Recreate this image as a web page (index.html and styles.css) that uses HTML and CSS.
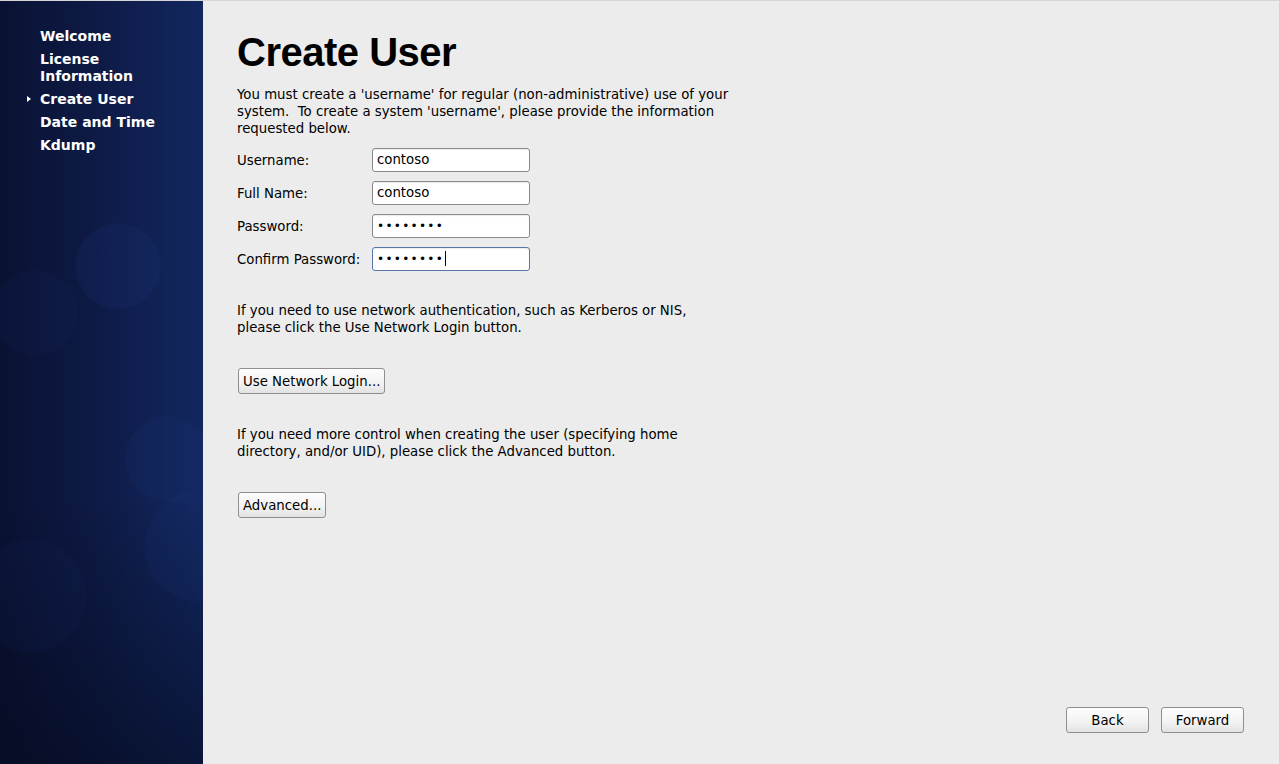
FILE: index.html
```html
<!DOCTYPE html>
<html>
<head>
<meta charset="utf-8">
<link rel="stylesheet" href="styles.css">
</head>
<body>
<div class="app">
  <nav class="sidebar">
    <ul class="steps">
      <li>Welcome</li>
      <li>License<br>Information</li>
      <li class="current">Create User</li>
      <li>Date and Time</li>
      <li>Kdump</li>
    </ul>
  </nav>
  <main class="content">
    <h1 class="title">Create User</h1>
    <p class="text">You must create a 'username' for regular (non-administrative) use of your<br>system.&nbsp; To create a system 'username', please provide the information<br>requested below.</p>
    <div class="form">
      <div class="row"><span class="label">Username:</span><div class="field">contoso</div></div>
      <div class="row"><span class="label">Full Name:</span><div class="field">contoso</div></div>
      <div class="row"><span class="label">Password:</span><div class="field dots">••••••••</div></div>
      <div class="row"><span class="label">Confirm Password:</span><div class="field dots focus">••••••••<span class="caret"></span></div></div>
    </div>
    <p class="text gap1">If you need to use network authentication, such as Kerberos or NIS,<br>please click the Use Network Login button.</p>
    <div class="btnrow gap2"><button class="btn">Use Network Login...</button></div>
    <p class="text gap3">If you need more control when creating the user (specifying home<br>directory, and/or UID), please click the Advanced button.</p>
    <div class="btnrow gap2"><button class="btn">Advanced...</button></div>
    <div class="footer">
      <button class="btn nav">Back</button>
      <button class="btn nav">Forward</button>
    </div>
  </main>
</div>
</body>
</html>
```
FILE: styles.css
```css
html, body {
  margin: 0;
  padding: 0;
  height: 100%;
}
body {
  font-family: "DejaVu Sans", sans-serif;
  font-size: 13.3px;
  color: #000;
  background: #ececec;
}
.app {
  display: flex;
  height: 764px;
  border-top: 1px solid #d6d6d6;
  box-sizing: border-box;
}
.sidebar {
  width: 203px;
  flex: none;
  background:
    radial-gradient(circle at 118px 265px, rgba(40,70,160,0.10) 0 42px, transparent 43px),
    radial-gradient(circle at 35px 312px, rgba(40,70,160,0.05) 0 42px, transparent 43px),
    radial-gradient(circle at 168px 458px, rgba(40,70,160,0.08) 0 42px, transparent 43px),
    radial-gradient(circle at 200px 545px, rgba(40,70,160,0.07) 0 55px, transparent 56px),
    radial-gradient(circle at 30px 595px, rgba(40,70,160,0.05) 0 56px, transparent 57px),
    linear-gradient(to bottom, rgba(0,0,0,0) 0%, rgba(0,0,0,0) 65%, rgba(3,8,25,0.55) 100%),
    linear-gradient(to right, #0a1233 0%, #0e1a45 45%, #12275f 100%);
}
.steps {
  list-style: none;
  margin: 0;
  padding: 27px 0 0 40px;
  color: #fff;
  font-weight: bold;
  font-size: 14px;
  line-height: 17px;
}
.steps li {
  margin-bottom: 6px;
  position: relative;
}
.steps li.current::before {
  content: "";
  position: absolute;
  left: -13px;
  top: 5px;
  border-left: 4px solid #fff;
  border-top: 3.5px solid transparent;
  border-bottom: 3.5px solid transparent;
}
.content {
  flex: 1;
  display: flex;
  flex-direction: column;
  padding: 0 34px 30px 34px;
}
.title {
  font-family: "Liberation Sans", Arial, sans-serif;
  font-weight: bold;
  font-size: 40px;
  line-height: 46px;
  margin: 28px 0 11px 0;
  letter-spacing: -0.5px;
}
.text {
  margin: 0;
  line-height: 17px;
}
.form {
  margin-top: 11px;
  display: flex;
  flex-direction: column;
  gap: 9px;
}
.row {
  display: flex;
  align-items: center;
}
.label {
  width: 135px;
}
.field {
  width: 158px;
  height: 24px;
  box-sizing: border-box;
  border: 1px solid #8a8a8a;
  border-radius: 3px;
  background: #fff;
  padding: 0 4px;
  line-height: 22px;
  box-shadow: inset 0 1px 1px rgba(0,0,0,0.08);
}
.field.dots {
  letter-spacing: 1.3px;
  font-size: 12px;
}
.field.focus {
  border-color: #5577a8;
}
.caret {
  display: inline-block;
  width: 1px;
  height: 15px;
  background: #000;
  vertical-align: -3px;
  margin-left: 1px;
}
.gap1 { margin-top: 31px; }
.gap2 { margin-top: 32px; }
.gap3 { margin-top: 32px; }
.btnrow {
  display: flex;
  padding-left: 1px;
}
.btn {
  font-family: "DejaVu Sans", sans-serif;
  font-size: 13.3px;
  color: #000;
  height: 26px;
  padding: 0 4px;
  border: 1px solid #8f8f8f;
  border-radius: 3px;
  background: linear-gradient(to bottom, #fdfdfd 0%, #f2f2f2 60%, #e2e2e2 100%);
  cursor: default;
}
.footer {
  margin-top: auto;
  display: flex;
  justify-content: flex-end;
  gap: 12px;
  padding-right: 1px;
  padding-bottom: 1px;
}
.btn.nav {
  width: 83px;
}
```
